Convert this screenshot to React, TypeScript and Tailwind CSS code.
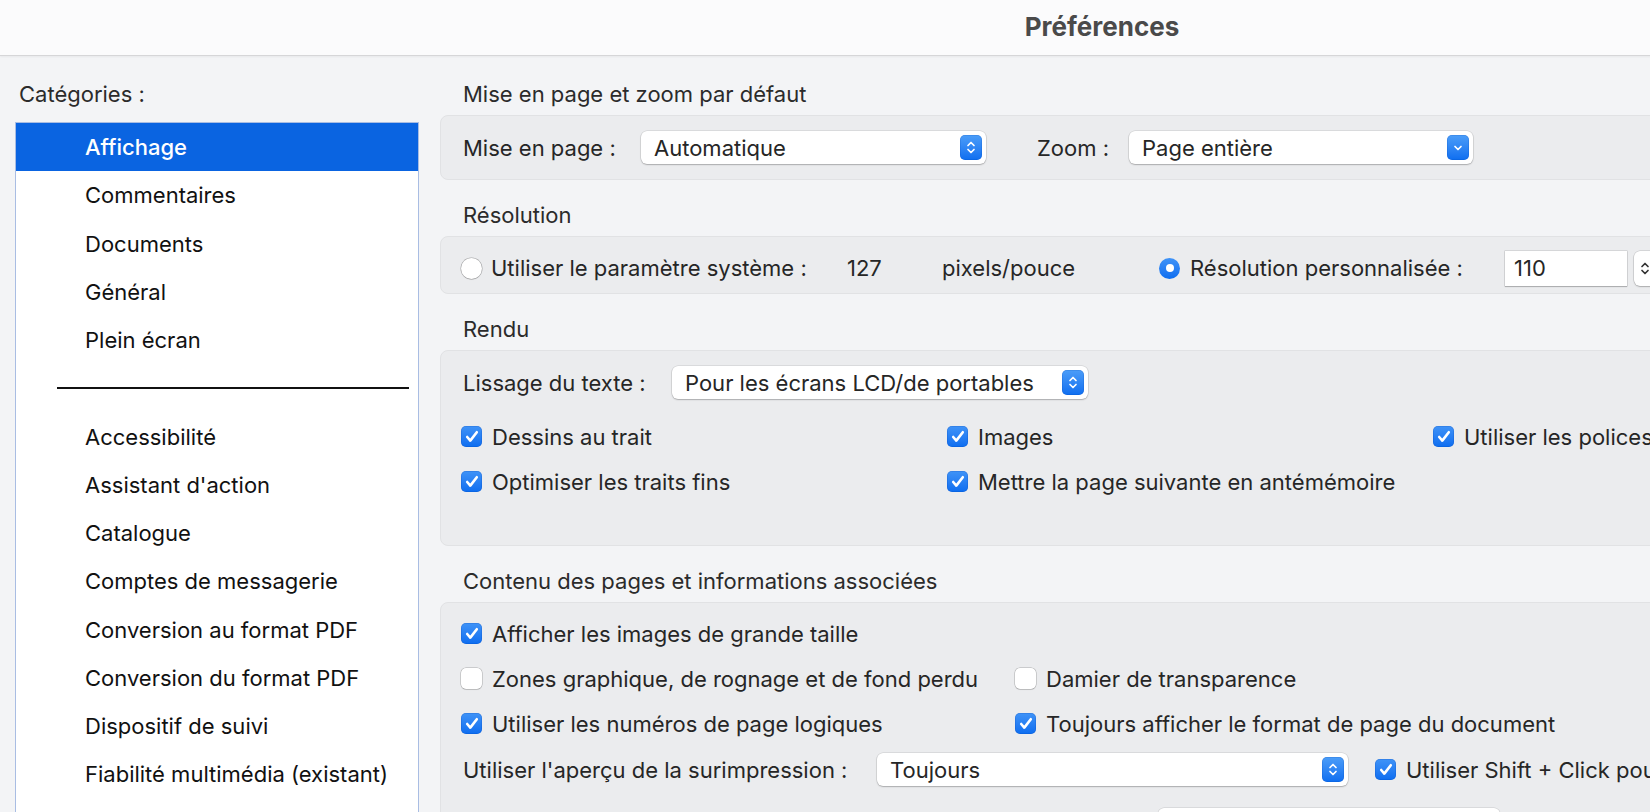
import React from 'react';

const categories = ['Affichage', 'Commentaires', 'Documents', 'Général', 'Plein écran'];
const more = [
  'Accessibilité',
  "Assistant d'action",
  'Catalogue',
  'Comptes de messagerie',
  'Conversion au format PDF',
  'Conversion du format PDF',
  'Dispositif de suivi',
  'Fiabilité multimédia (existant)',
  'Formulaires',
];

function UpDown({ color = 'white' }: { color?: string }) {
  return (
    <svg width="10" height="15" viewBox="0 0 10 15" fill="none" stroke={color} strokeWidth="1.7" strokeLinecap="round" strokeLinejoin="round">
      <polyline points="2,5.5 5,2.5 8,5.5" />
      <polyline points="2,9.5 5,12.5 8,9.5" />
    </svg>
  );
}

function Down() {
  return (
    <svg width="10" height="8" viewBox="0 0 10 8" fill="none" stroke="white" strokeWidth="1.7" strokeLinecap="round" strokeLinejoin="round">
      <polyline points="2,2.5 5,5.5 8,2.5" />
    </svg>
  );
}

function Select({ value, className, single }: { value: string; className: string; single?: boolean }) {
  return (
    <div className={`flex h-[33px] shrink-0 items-center justify-between rounded-[6px] bg-white pl-[13px] pr-[4px] shadow-[0_0_0_0.5px_rgba(0,0,0,0.14),0_1px_1.5px_rgba(0,0,0,0.22)] ${className}`}>
      <span>{value}</span>
      <span className="flex h-[25px] w-[22px] items-center justify-center rounded-[5px] bg-gradient-to-b from-[#4b9df8] to-[#0c6ef0] shadow-[inset_0_0_0_0.5px_rgba(0,70,180,0.35)]">
        {single ? <Down /> : <UpDown />}
      </span>
    </div>
  );
}

function Check({ on }: { on: boolean }) {
  if (!on) {
    return <span className="h-[21px] w-[21px] shrink-0 rounded-[5px] bg-white shadow-[0_0_0_0.5px_rgba(0,0,0,0.28),0_1px_1px_rgba(0,0,0,0.08)]" />;
  }
  return (
    <span className="flex h-[21px] w-[21px] shrink-0 items-center justify-center rounded-[5px] bg-gradient-to-b from-[#3f93f7] to-[#0b6df0] shadow-[inset_0_0_0_0.5px_rgba(0,60,170,0.35)]">
      <svg width="14" height="13" viewBox="0 0 14 13" fill="none" stroke="white" strokeWidth="2.6" strokeLinecap="round" strokeLinejoin="round">
        <polyline points="2.2,7 5.3,10.6 11.8,2.2" />
      </svg>
    </span>
  );
}

function CheckItem({ on, label, h = 'h-[45px]' }: { on: boolean; label: string; h?: string }) {
  return (
    <div className={`flex ${h} items-center whitespace-nowrap`}>
      <Check on={on} />
      <span className="ml-[10px]">{label}</span>
    </div>
  );
}

function Radio({ on }: { on: boolean }) {
  if (!on) {
    return <span className="h-[21px] w-[21px] shrink-0 rounded-full bg-white shadow-[0_0_0_0.5px_rgba(0,0,0,0.3),0_1px_1px_rgba(0,0,0,0.08)]" />;
  }
  return (
    <span className="flex h-[21px] w-[21px] shrink-0 items-center justify-center rounded-full bg-gradient-to-b from-[#3f93f7] to-[#0b6df0]">
      <span className="h-[8px] w-[8px] rounded-full bg-white" />
    </span>
  );
}

function Heading({ children }: { children: React.ReactNode }) {
  return <div className="mb-[9px] h-[24px] pl-[23px] leading-[24px] text-[#2b2b2b]">{children}</div>;
}

const box = 'rounded-[8px] border border-[#e1e2e4] bg-[#ebecee]';

export default function App() {
  return (
    <div className="h-[812px] w-[1650px] overflow-hidden bg-[#f3f4f6] text-[22px] leading-[26px] text-[#262626] [font-family:Inter,sans-serif]">
      <div className="w-[2204px]">
        {/* barre de titre */}
        <div className="flex h-[56px] items-center justify-center border-b border-[#d6d6d8] bg-[#fbfbfc] pb-[2px] shadow-[0_1px_2px_rgba(0,0,0,0.05)]">
          <span className="text-[26px] font-bold text-[#4a4a4a]">Préférences</span>
        </div>

        <div className="flex">
          {/* catégories */}
          <div className="w-[440px] shrink-0 pt-[26px]">
            <div className="h-[24px] pl-[19px] leading-[24px] text-[#2b2b2b]">Catégories :</div>
            <div className="ml-[15px] mt-[16px] h-[720px] w-[404px] border border-[#a9bde3] bg-white text-[#111]">
              {categories.map((c, i) => (
                <div
                  key={c}
                  className={`flex h-[48.25px] items-center pl-[69px] ${i === 0 ? 'bg-[#0a64e1] font-medium text-white' : ''}`}
                >
                  {c}
                </div>
              ))}
              <div className="flex h-[48.25px] items-center pl-[41px]">
                <div className="h-[2px] w-[352px] bg-[#111]" />
              </div>
              {more.map((c) => (
                <div key={c} className="flex h-[48.25px] items-center pl-[69px]">
                  {c}
                </div>
              ))}
            </div>
          </div>

          {/* réglages */}
          <div className="flex-1 pt-[26px]">
            <Heading>Mise en page et zoom par défaut</Heading>
            <div className={`${box} flex h-[65px] items-center pl-[22px]`}>
              <span className="w-[178px] shrink-0">Mise en page :</span>
              <Select value="Automatique" className="w-[345px]" />
              <span className="ml-[51px] w-[92px] shrink-0">Zoom :</span>
              <Select value="Page entière" className="w-[344px]" single />
            </div>

            <div className="mt-[23px]">
              <Heading>Résolution</Heading>
              <div className={`${box} flex h-[58px] items-center whitespace-nowrap pl-[20px] pt-[6px]`}>
                <Radio on={false} />
                <span className="ml-[9px] w-[356px] shrink-0">Utiliser le paramètre système :</span>
                <span className="w-[95px] shrink-0">127</span>
                <span className="w-[217px] shrink-0">pixels/pouce</span>
                <Radio on />
                <span className="ml-[10px] w-[315px] shrink-0">Résolution personnalisée :</span>
                <div className="flex h-[35px] w-[122px] shrink-0 items-center bg-white pl-[9px] shadow-[0_0_0_0.5px_rgba(0,0,0,0.18),0_1px_1px_rgba(0,0,0,0.18)]">
                  110
                </div>
                <div className="ml-[7px] flex h-[35px] w-[22px] shrink-0 items-center justify-center rounded-[6px] bg-white shadow-[0_0_0_0.5px_rgba(0,0,0,0.18),0_1px_1.5px_rgba(0,0,0,0.2)]">
                  <UpDown color="#333" />
                </div>
              </div>
            </div>

            <div className="mt-[23px]">
              <Heading>Rendu</Heading>
              <div className={`${box} h-[196px] pl-[20px] pt-[15px]`}>
                <div className="flex items-center pl-[2px]">
                  <span className="w-[209px] shrink-0">Lissage du texte :</span>
                  <Select value="Pour les écrans LCD/de portables" className="w-[416px]" />
                </div>
                <div className="mt-[15px] grid grid-cols-[486px_486px_auto]">
                  <CheckItem on label="Dessins au trait" />
                  <CheckItem on label="Images" />
                  <CheckItem on label="Utiliser les polices système locales" />
                  <CheckItem on label="Optimiser les traits fins" />
                  <CheckItem on label="Mettre la page suivante en antémémoire" />
                </div>
              </div>
            </div>

            <div className="mt-[23px]">
              <Heading>Contenu des pages et informations associées</Heading>
              <div className={`${box} h-[300px] pl-[20px] pt-[8px]`}>
                <CheckItem on label="Afficher les images de grande taille" />
                <div className="grid grid-cols-[554px_auto]">
                  <CheckItem on={false} label="Zones graphique, de rognage et de fond perdu" />
                  <CheckItem on={false} label="Damier de transparence" />
                  <CheckItem on label="Utiliser les numéros de page logiques" />
                  <CheckItem on label="Toujours afficher le format de page du document" />
                </div>
                <div className="mt-[7px] flex h-[33px] items-center whitespace-nowrap pl-[2px]">
                  <span className="w-[414px] shrink-0">Utiliser l'aperçu de la surimpression :</span>
                  <Select value="Toujours" className="w-[471px]" />
                  <div className="ml-[27px]">
                    <CheckItem on h="h-[33px]" label="Utiliser Shift + Click pour sélectionner" />
                  </div>
                </div>
                <div className="mt-[22px] flex pl-[697px]">
                  <Select value="" className="w-[342px]" single />
                </div>
              </div>
            </div>
          </div>
        </div>
      </div>
    </div>
  );
}
